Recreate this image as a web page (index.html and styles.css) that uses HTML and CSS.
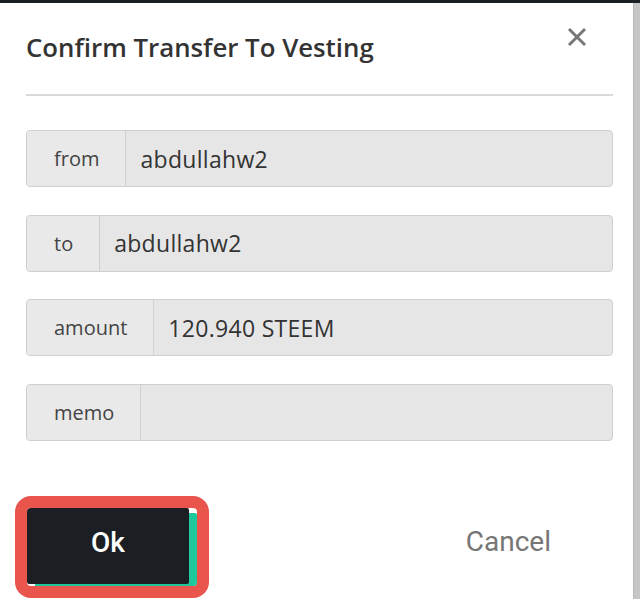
FILE: index.html
```html
<!DOCTYPE html>
<html lang="en">
<head>
<meta charset="UTF-8" />
<meta name="viewport" content="width=device-width, initial-scale=1" />
<title>Confirm Transfer To Vesting</title>
<link rel="stylesheet" href="styles.css">
</head>
<body>
  <div class="screen">
    <div class="modal">
      <div class="modal-head">
        <h1>Confirm Transfer To Vesting</h1>
        <button class="close" aria-label="Close">
          <svg width="20" height="20" viewBox="0 0 20 20">
            <path d="M2 2 L18 18 M18 2 L2 18" stroke="#777" stroke-width="3" fill="none" />
          </svg>
        </button>
      </div>
      <div class="divider"></div>

      <div class="fields">
        <div class="field">
          <span class="label">from</span>
          <span class="value">abdullahw2</span>
        </div>
        <div class="field">
          <span class="label">to</span>
          <span class="value">abdullahw2</span>
        </div>
        <div class="field">
          <span class="label">amount</span>
          <span class="value">120.940 STEEM</span>
        </div>
        <div class="field">
          <span class="label">memo</span>
          <span class="value"></span>
        </div>
      </div>

      <div class="actions">
        <div class="highlight">
          <button class="btn-ok">Ok</button>
        </div>
        <button class="btn-cancel">Cancel</button>
      </div>
    </div>
    <div class="scroll"></div>
  </div>
</body>
</html>
```

FILE: styles.css
```css
body, html {
  margin: 0; padding: 0; height: 100%; overflow: hidden;
  background: #fff;
  font-family: "Open Sans", "Liberation Sans", sans-serif;
}
.screen {
  display: flex;
  height: 599px;
  box-sizing: border-box;
  border-top: 3px solid #1c2026;
}
.modal {
  flex: 1;
  padding: 0 20px 0 26px;
}
.scroll {
  width: 6px;
  background: #c6c6c6;
  border-left: 1px solid #b8b8b8;
}
.modal-head {
  display: flex;
  justify-content: space-between;
  align-items: flex-start;
  padding: 24px 0 31px 0;
}
.modal-head h1 {
  margin: 4px 0 0 0;
  font-size: 25.8px;
  line-height: 32px;
  font-weight: 600;
  color: #333;
}
.close {
  margin: 0 26px 0 0;
  padding: 0;
  border: none;
  background: none;
  width: 20px;
  height: 20px;
}
.divider {
  height: 2px;
  background: #dadada;
}
.fields {
  display: flex;
  flex-direction: column;
  gap: 27.5px;
  margin-top: 34px;
}
.field {
  display: flex;
  height: 57px;
  box-sizing: border-box;
  border: 1px solid #cfcfcf;
  border-radius: 4px;
  background: #e6e6e6;
  overflow: hidden;
}
.field .label {
  display: flex;
  align-items: center;
  padding: 0 26px 0 27px;
  background: #e9e9e9;
  border-right: 1px solid #cfcfcf;
  font-size: 20px;
  color: #444;
}
.field .value {
  display: flex;
  align-items: center;
  padding-left: 14px;
  font-size: 23px;
  letter-spacing: 0.3px;
  color: #333;
}
.actions {
  display: flex;
  justify-content: space-between;
  align-items: center;
  margin: 55px 0 0 -11px;
}
.highlight {
  width: 170px;
  height: 78px;
  border: 12px solid #e9544c;
  border-radius: 16px;
  overflow: hidden;
  background: #fff;
}
.btn-ok {
  display: block;
  width: 162px;
  height: 76px;
  padding: 0 0 6px 0;
  border: none;
  border-radius: 2px;
  background: #1b1f24;
  box-shadow: 8px 5px 0 #1fc89c;
  color: #fff;
  font-family: Roboto, sans-serif;
  font-size: 28px;
  font-weight: 500;
}
.btn-cancel {
  border: none;
  background: none;
  margin-bottom: 10px;
  padding: 10px 62px 10px 20px;
  color: #767676;
  font-family: Roboto, sans-serif;
  font-size: 28px;
}
```
